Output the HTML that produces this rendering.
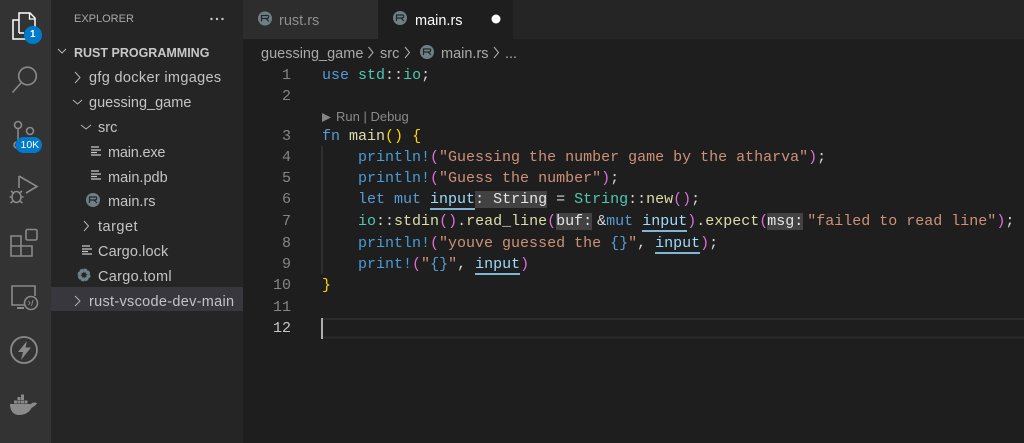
<!DOCTYPE html>
<html><head><meta charset="utf-8">
<style>
html,body{margin:0;padding:0;background:#1e1e1e;}
#r{position:relative;width:1024px;height:443px;overflow:hidden;background:#1e1e1e;font-family:"Liberation Sans",sans-serif;filter:blur(0.35px);}
.a{position:absolute;}
.t{position:absolute;white-space:pre;color:#c4c4c4;font-size:14.5px;line-height:20px;}
.c{position:absolute;left:322px;white-space:pre;font-family:"Liberation Mono",monospace;font-size:15px;line-height:20px;color:#d4d4d4;}
.n{position:absolute;width:32px;left:259px;text-align:right;font-family:"Liberation Mono",monospace;font-size:15px;line-height:20px;color:#858585;}
.k{color:#569cd6}.g{color:#4ec9b0}.s{color:#ce9178}.f{color:#dcdcaa}.b{color:#9cdcfe}.y{color:#ffd700}.p{color:#da70d6}.m{color:#4a9cd6}
.u{border-bottom:2px solid #7fb6d6;color:#9cdcfe;padding-bottom:0}
.h{background:#424242;color:#e6e6e6;}
.w{display:inline-block;width:5px;}
svg{position:absolute;overflow:visible}
</style></head><body>
<div id="r">
<div class="a" style="left:0;top:0;width:51px;height:443px;background:#333"></div>
<div class="a" style="left:51px;top:0;width:192px;height:443px;background:#252526"></div>
<div class="a" style="left:243px;top:0;width:781px;height:39px;background:#252526"></div>
<div class="a" style="left:243px;top:0;width:135px;height:39px;background:#2d2d2d"></div>
<div class="a" style="left:378px;top:0;width:135px;height:39px;background:#1e1e1e"></div>
<div class="a" style="left:51px;top:287px;width:192px;height:24px;background:#37373d"></div>

<svg style="left:0;top:0" width="51" height="443" fill="none" stroke="#8a8a8a" stroke-width="1.6">
<g stroke="#ffffff"><path d="M19 33V13H30L35 18V27" stroke-width="1.5"/><path d="M29.500 13V19H35" stroke-width="1.300"/><path d="M19 20H13V39H26" stroke-width="1.500"/><path d="M19 33H24" stroke-width="1.500"/></g>
<circle cx="33" cy="35" r="9" fill="#007acc" stroke="none"/>
<circle cx="27.500" cy="76" r="8.800"/><path d="M21 83L12.500 92.500"/>
<circle cx="18" cy="125" r="3.500"/><circle cx="30" cy="131" r="3.500"/><path d="M18 129V143"/><circle cx="17" cy="145" r="3"/>
<rect x="15.500" y="137" width="26.500" height="16" rx="8" fill="#007acc" stroke="none"/>
<path d="M19 176L37 186.500L26 193M19 176V188"/>
<ellipse cx="16.500" cy="197" rx="4.500" ry="5.500"/><path d="M11 191L14 193.500M22 191L19 193.500M9.500 197H12M21 197H23.500M10.500 203L13 201M22.500 203L20 201"/>
<path d="M11 236H21V256H11ZM11 246H32V256H21"/><rect x="26" y="229.500" width="11" height="10.500" rx="1.500"/>
<path d="M24 305H12V286H35V296"/><path d="M17 308H24" stroke-width="2"/><circle cx="31" cy="303" r="6.500"/><path d="M28.500 301L30 303L28.500 305M33 300L31.500 306" stroke-width="1"/>
<circle cx="24" cy="350" r="13" stroke-width="1.800"/>
<path d="M27 341L18 352H23L21 360L31 347.500H25.500Z" fill="#8a8a8a" stroke="none"/>
<g fill="#8a8a8a" stroke="none"><path d="M10 404H31C32 402.500 34 402 37 403C36 405.500 33 407 31.500 408C29 413 24 415 19 415C13 415 10 410 10 404Z"/><rect x="14" y="400.500" width="3" height="3"/><rect x="17.500" y="400.500" width="3" height="3"/><rect x="21" y="400.500" width="3" height="3"/><rect x="24.500" y="400.500" width="3" height="3"/><rect x="17.500" y="397" width="3" height="3"/><rect x="21" y="397" width="3" height="3"/><rect x="21" y="394.500" width="3" height="2.500"/></g>
<g fill="none" stroke="#b4b4b4" stroke-width="1">
<path d="M58 49L62 53L66 49M75 72L80 77.500L75 83M73 100L77.500 104L82 100M81 125L86 129L91 125M84 221L88.500 226L84 231M75 296L80 301L75 306"/>
</g>
</svg>
<div class="t" style="left:30px;top:25px;color:#fff;font-size:10px;font-weight:bold;">1</div>
<div class="t" style="left:20.500px;top:135px;color:#fff;font-size:10.500px;">10K</div>

<div class="t" style="left:74px;top:9px;font-size:11px;color:#a8a8a8;">EXPLORER</div>
<svg style="left:0;top:0" width="10" height="10"><g fill="#c8c8c8"><circle cx="211.500" cy="19" r="1.200"/><circle cx="217" cy="19" r="1.200"/><circle cx="222.500" cy="19" r="1.200"/></g></svg>
<div class="t" style="left:74px;top:43px;font-size:12.500px;font-weight:bold;color:#c8c8c8;">RUST PROGRAMMING</div>
<div class="t" style="left:89px;top:68px;letter-spacing:.33px">gfg docker imgages</div>
<div class="t" style="left:89px;top:93px;">guessing_game</div>
<div class="t" style="left:98px;top:118px;">src</div>
<div class="t" style="left:108px;top:143px;letter-spacing:-.2px">main.exe</div>
<div class="t" style="left:108px;top:168px;">main.pdb</div>
<div class="t" style="left:108px;top:192px;">main.rs</div>
<div class="t" style="left:98px;top:217px;letter-spacing:.5px">target</div>
<div class="t" style="left:98px;top:242px;letter-spacing:.1px">Cargo.lock</div>
<div class="t" style="left:98px;top:267px;letter-spacing:.3px">Cargo.toml</div>
<div class="t" style="left:89px;top:292px;letter-spacing:.3px">rust-vscode-dev-main</div>

<svg style="left:0;top:0" width="1024" height="443" fill="none">
<g stroke="#c8c8c8" stroke-width="1.300"><path d="M91 147H99M91 150H101M91 152.500H97M91 155H101"/><path d="M91 171H99M91 174H101M91 176.500H97M91 179H101"/><path d="M82 246H90M82 249H92M82 251.500H88M82 254H92"/></g>
<g fill="#6d8086"><circle cx="93" cy="200" r="7"/><circle cx="265" cy="18.500" r="7"/><circle cx="400" cy="18" r="7"/><circle cx="427" cy="52" r="7"/></g>
<g stroke="#252526" stroke-width="1.200"><path d="M89.500 203V197H96C97 197 97 200 95 200H90M94 200L97 203"/><path d="M261.500 21.500V15.500H268C269 15.500 269 18.500 267 18.500H262M266 18.500L269 21.500"/><path d="M396.500 21V15H403C404 15 404 18 402 18H397M401 18L404 21"/><path d="M423.500 55V49H430C431 49 431 52 429 52H424M428 52L431 55"/></g>
<circle cx="84" cy="275" r="4.500" stroke="#6d8086" stroke-width="4" stroke-dasharray="2.500 1"/>
<circle cx="84" cy="275" r="4.500" stroke="#6d8086" stroke-width="2.500"/>
<circle cx="496" cy="19" r="4.500" fill="#fff"/>
<g stroke="#b0b0b0" stroke-width="1"><path d="M368.500 47L373 52.500L368.500 58M405 47L409.500 52.500L405 58M494 47L498.500 52.500L494 58"/></g>
<path d="M322 113L331 117.500L322 122Z" fill="#858585"/>
<path d="M322 146V274" stroke="#404040"/>
<path d="M322 319H1024M322 337.500H1024" stroke="#2a2a2a" stroke-width="2"/>
<rect x="321" y="318" width="2" height="21" fill="#aeafad"/>
</svg>
<div class="t" style="left:279px;top:11px;color:#8f8f8f;">rust.rs</div>
<div class="t" style="left:415px;top:11px;color:#fff;">main.rs</div>
<div class="t" style="left:261px;top:44px;color:#aaa;">guessing_game</div>
<div class="t" style="left:380px;top:44px;color:#aaa;">src</div>
<div class="t" style="left:441px;top:44px;color:#aaa;">main.rs</div>
<div class="t" style="left:505px;top:44px;color:#aaa;">...</div>
<div class="t" style="left:336px;top:107px;color:#8a8a8a;font-size:13px;">Run | Debug</div>

<div class="n" style="top:66px">1</div>
<div class="n" style="top:87px">2</div>
<div class="n" style="top:127px">3</div>
<div class="n" style="top:148px">4</div>
<div class="n" style="top:169px">5</div>
<div class="n" style="top:190px">6</div>
<div class="n" style="top:212px">7</div>
<div class="n" style="top:234px">8</div>
<div class="n" style="top:255px">9</div>
<div class="n" style="top:276px">10</div>
<div class="n" style="top:298px">11</div>
<div class="n" style="top:319px;color:#c6c6c6">12</div>

<div class="c" style="top:66px"><span class="k">use</span> <span class="g">std</span>::<span class="g">io</span>;</div>
<div class="c" style="top:127px"><span class="k">fn</span> <span class="f">main</span><span class="y">()</span> <span class="y">{</span></div>
<div class="c" style="top:148px">    <span class="m">println!</span><span class="p">(</span><span class="s">"Guessing the number game by the atharva"</span><span class="p">)</span>;</div>
<div class="c" style="top:169px">    <span class="m">println!</span><span class="p">(</span><span class="s">"Guess the number"</span><span class="p">)</span>;</div>
<div class="c" style="top:190px">    <span class="k">let mut</span> <span class="u">input</span><span class="h">: String</span> = <span class="g">String</span>::<span class="f">new</span><span class="p">()</span>;</div>
<div class="c" style="top:212px">    <span class="g">io</span>::<span class="f">stdin</span><span class="p">()</span>.<span class="f">read_line</span><span class="p">(</span><span class="h">buf:</span><span class="w"></span>&amp;<span class="k">mut</span> <span class="u">input</span><span class="p">)</span>.<span class="f">expect</span><span class="p">(</span><span class="h" style="margin-left:-1px">msg:</span><span class="w" style="width:4px"></span><span class="s">"failed to read line"</span><span class="p">)</span>;</div>
<div class="c" style="top:234px">    <span class="m">println!</span><span class="p">(</span><span class="s">"youve guessed the </span><span class="k">{}</span><span class="s">"</span>, <span class="u">input</span><span class="p">)</span>;</div>
<div class="c" style="top:255px">    <span class="m">print!</span><span class="p">(</span><span class="s">"</span><span class="k">{}</span><span class="s">"</span>, <span class="u">input</span><span class="p">)</span></div>
<div class="c" style="top:276px"><span class="y">}</span></div>
</div>
</body></html>
